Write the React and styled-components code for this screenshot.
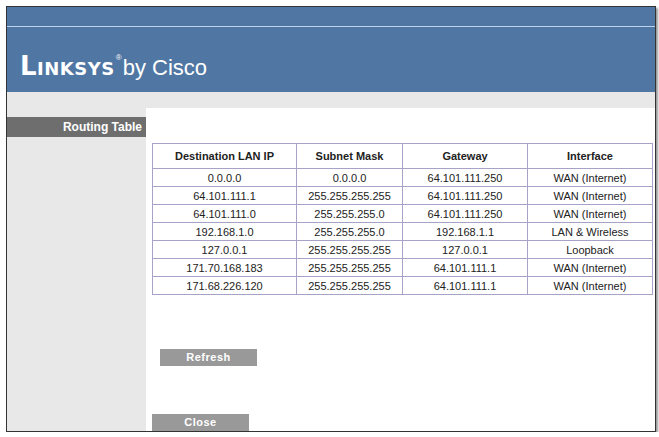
import React from 'react'
import styled, { createGlobalStyle } from 'styled-components'

const Global = createGlobalStyle`
  body { margin: 0; background: #fff; font-family: "Liberation Sans", Arial, sans-serif; }
`

const Frame = styled.div`
  margin: 6px 0 0 6px;
  width: 648px;
  height: 424px;
  border: 1px solid #333;
  box-shadow: 2px 2px 2px #999;
  display: flex;
  flex-direction: column;
  background: #e8e8e8;
  overflow: hidden;
`
const Header = styled.div`
  height: 85px;
  background: #5077a3;
  display: flex;
  flex-direction: column;
`
const TopLine = styled.div`
  height: 19px;
  border-bottom: 1px solid #b9d3ec;
`
const Logo = styled.div`
  padding: 24px 0 0 13px;
  color: #fff;
  display: flex;
  align-items: baseline;
`
const Brand = styled.span`
  font-family: "DejaVu Sans", sans-serif;
  font-weight: bold;
  font-size: 26px;
  letter-spacing: 0.5px;
  font-variant: small-caps;
`
const Reg = styled.span`
  font-size: 8px;
  align-self: flex-start;
  margin: 2px 1px 0;
`
const By = styled.span`
  font-size: 22px;
`
const Body = styled.div`
  flex: 1;
  display: flex;
  padding-top: 16px;
`
const Side = styled.div`
  width: 139px;
  padding-top: 9px;
`
const SideItem = styled.div`
  height: 20px;
  background: #6e6e6e;
  color: #fff;
  font-weight: bold;
  font-size: 12px;
  text-align: right;
  padding-right: 4px;
  line-height: 20px;
`
const Content = styled.div`
  flex: 1;
  background: #fff;
  padding: 35px 0 0 6px;
  display: flex;
  flex-direction: column;
`
const Table = styled.table`
  border-collapse: collapse;
  width: 501px;
  font-size: 11px;
  color: #222;
  td, th { border: 1px solid #a8a2c8; text-align: center; padding: 0; }
  th { height: 24px; font-size: 11px; }
  td { height: 17px; }
`
const Button = styled.div`
  width: 97px;
  height: 17px;
  background: #999;
  color: #fff;
  font-weight: bold;
  font-size: 11px;
  text-align: center;
  line-height: 17px;
  letter-spacing: 0.5px;
  margin-left: ${p => p.$left}px;
  margin-top: ${p => p.$top}px;
`

const rows = [
  ['0.0.0.0', '0.0.0.0', '64.101.111.250', 'WAN (Internet)'],
  ['64.101.111.1', '255.255.255.255', '64.101.111.250', 'WAN (Internet)'],
  ['64.101.111.0', '255.255.255.0', '64.101.111.250', 'WAN (Internet)'],
  ['192.168.1.0', '255.255.255.0', '192.168.1.1', 'LAN & Wireless'],
  ['127.0.0.1', '255.255.255.255', '127.0.0.1', 'Loopback'],
  ['171.70.168.183', '255.255.255.255', '64.101.111.1', 'WAN (Internet)'],
  ['171.68.226.120', '255.255.255.255', '64.101.111.1', 'WAN (Internet)'],
]

export default function App() {
  return (
    <>
      <Global />
      <Frame>
        <Header>
          <TopLine />
          <Logo>
            <Brand>Linksys</Brand><Reg>®</Reg><By>by Cisco</By>
          </Logo>
        </Header>
        <Body>
          <Side><SideItem>Routing Table</SideItem></Side>
          <Content>
            <Table>
              <colgroup>
                <col style={{ width: 144 }} /><col style={{ width: 106 }} />
                <col style={{ width: 125 }} /><col style={{ width: 125 }} />
              </colgroup>
              <thead>
                <tr><th>Destination LAN IP</th><th>Subnet Mask</th><th>Gateway</th><th>Interface</th></tr>
              </thead>
              <tbody>
                {rows.map((r, i) => (
                  <tr key={i}>{r.map((c, j) => <td key={j}>{c}</td>)}</tr>
                ))}
              </tbody>
            </Table>
            <Button $left={8} $top={54}>Refresh</Button>
            <Button $left={0} $top={48}>Close</Button>
          </Content>
        </Body>
      </Frame>
    </>
  )
}
